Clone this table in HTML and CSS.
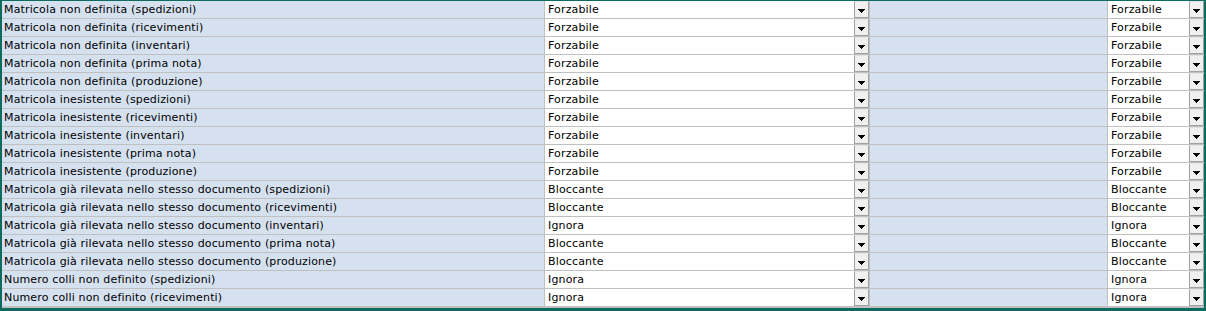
FILE: index.html
```html
<!DOCTYPE html>
<html lang="it">
<head>
<meta charset="utf-8">
<title>Controlli matricole</title>
<link rel="stylesheet" href="styles.css">
</head>
<body>
<div class="frame">
  <div class="grid">
    <div class="label">Matricola non definita (spedizioni)</div><div class="sel"><span class="val">Forzabile</span><span class="btn"><svg width="7" height="4" viewBox="0 0 7 4"><path d="M0 0h7v1H0zM1 1h5v1H1zM2 2h3v1H2zM3 3h1v1H3z"/></svg></span></div><div class="empty"></div><div class="sel alt"><span class="val">Forzabile</span><span class="btn"><svg width="7" height="4" viewBox="0 0 7 4"><path d="M0 0h7v1H0zM1 1h5v1H1zM2 2h3v1H2zM3 3h1v1H3z"/></svg></span></div>
    <div class="label">Matricola non definita (ricevimenti)</div><div class="sel"><span class="val">Forzabile</span><span class="btn"><svg width="7" height="4" viewBox="0 0 7 4"><path d="M0 0h7v1H0zM1 1h5v1H1zM2 2h3v1H2zM3 3h1v1H3z"/></svg></span></div><div class="empty"></div><div class="sel alt"><span class="val">Forzabile</span><span class="btn"><svg width="7" height="4" viewBox="0 0 7 4"><path d="M0 0h7v1H0zM1 1h5v1H1zM2 2h3v1H2zM3 3h1v1H3z"/></svg></span></div>
    <div class="label">Matricola non definita (inventari)</div><div class="sel"><span class="val">Forzabile</span><span class="btn"><svg width="7" height="4" viewBox="0 0 7 4"><path d="M0 0h7v1H0zM1 1h5v1H1zM2 2h3v1H2zM3 3h1v1H3z"/></svg></span></div><div class="empty"></div><div class="sel alt"><span class="val">Forzabile</span><span class="btn"><svg width="7" height="4" viewBox="0 0 7 4"><path d="M0 0h7v1H0zM1 1h5v1H1zM2 2h3v1H2zM3 3h1v1H3z"/></svg></span></div>
    <div class="label">Matricola non definita (prima nota)</div><div class="sel"><span class="val">Forzabile</span><span class="btn"><svg width="7" height="4" viewBox="0 0 7 4"><path d="M0 0h7v1H0zM1 1h5v1H1zM2 2h3v1H2zM3 3h1v1H3z"/></svg></span></div><div class="empty"></div><div class="sel alt"><span class="val">Forzabile</span><span class="btn"><svg width="7" height="4" viewBox="0 0 7 4"><path d="M0 0h7v1H0zM1 1h5v1H1zM2 2h3v1H2zM3 3h1v1H3z"/></svg></span></div>
    <div class="label">Matricola non definita (produzione)</div><div class="sel"><span class="val">Forzabile</span><span class="btn"><svg width="7" height="4" viewBox="0 0 7 4"><path d="M0 0h7v1H0zM1 1h5v1H1zM2 2h3v1H2zM3 3h1v1H3z"/></svg></span></div><div class="empty"></div><div class="sel alt"><span class="val">Forzabile</span><span class="btn"><svg width="7" height="4" viewBox="0 0 7 4"><path d="M0 0h7v1H0zM1 1h5v1H1zM2 2h3v1H2zM3 3h1v1H3z"/></svg></span></div>
    <div class="label">Matricola inesistente (spedizioni)</div><div class="sel"><span class="val">Forzabile</span><span class="btn"><svg width="7" height="4" viewBox="0 0 7 4"><path d="M0 0h7v1H0zM1 1h5v1H1zM2 2h3v1H2zM3 3h1v1H3z"/></svg></span></div><div class="empty"></div><div class="sel alt"><span class="val">Forzabile</span><span class="btn"><svg width="7" height="4" viewBox="0 0 7 4"><path d="M0 0h7v1H0zM1 1h5v1H1zM2 2h3v1H2zM3 3h1v1H3z"/></svg></span></div>
    <div class="label">Matricola inesistente (ricevimenti)</div><div class="sel"><span class="val">Forzabile</span><span class="btn"><svg width="7" height="4" viewBox="0 0 7 4"><path d="M0 0h7v1H0zM1 1h5v1H1zM2 2h3v1H2zM3 3h1v1H3z"/></svg></span></div><div class="empty"></div><div class="sel alt"><span class="val">Forzabile</span><span class="btn"><svg width="7" height="4" viewBox="0 0 7 4"><path d="M0 0h7v1H0zM1 1h5v1H1zM2 2h3v1H2zM3 3h1v1H3z"/></svg></span></div>
    <div class="label">Matricola inesistente (inventari)</div><div class="sel"><span class="val">Forzabile</span><span class="btn"><svg width="7" height="4" viewBox="0 0 7 4"><path d="M0 0h7v1H0zM1 1h5v1H1zM2 2h3v1H2zM3 3h1v1H3z"/></svg></span></div><div class="empty"></div><div class="sel alt"><span class="val">Forzabile</span><span class="btn"><svg width="7" height="4" viewBox="0 0 7 4"><path d="M0 0h7v1H0zM1 1h5v1H1zM2 2h3v1H2zM3 3h1v1H3z"/></svg></span></div>
    <div class="label">Matricola inesistente (prima nota)</div><div class="sel"><span class="val">Forzabile</span><span class="btn"><svg width="7" height="4" viewBox="0 0 7 4"><path d="M0 0h7v1H0zM1 1h5v1H1zM2 2h3v1H2zM3 3h1v1H3z"/></svg></span></div><div class="empty"></div><div class="sel alt"><span class="val">Forzabile</span><span class="btn"><svg width="7" height="4" viewBox="0 0 7 4"><path d="M0 0h7v1H0zM1 1h5v1H1zM2 2h3v1H2zM3 3h1v1H3z"/></svg></span></div>
    <div class="label">Matricola inesistente (produzione)</div><div class="sel"><span class="val">Forzabile</span><span class="btn"><svg width="7" height="4" viewBox="0 0 7 4"><path d="M0 0h7v1H0zM1 1h5v1H1zM2 2h3v1H2zM3 3h1v1H3z"/></svg></span></div><div class="empty"></div><div class="sel alt"><span class="val">Forzabile</span><span class="btn"><svg width="7" height="4" viewBox="0 0 7 4"><path d="M0 0h7v1H0zM1 1h5v1H1zM2 2h3v1H2zM3 3h1v1H3z"/></svg></span></div>
    <div class="label">Matricola già rilevata nello stesso documento (spedizioni)</div><div class="sel"><span class="val">Bloccante</span><span class="btn"><svg width="7" height="4" viewBox="0 0 7 4"><path d="M0 0h7v1H0zM1 1h5v1H1zM2 2h3v1H2zM3 3h1v1H3z"/></svg></span></div><div class="empty"></div><div class="sel alt"><span class="val">Bloccante</span><span class="btn"><svg width="7" height="4" viewBox="0 0 7 4"><path d="M0 0h7v1H0zM1 1h5v1H1zM2 2h3v1H2zM3 3h1v1H3z"/></svg></span></div>
    <div class="label">Matricola già rilevata nello stesso documento (ricevimenti)</div><div class="sel"><span class="val">Bloccante</span><span class="btn"><svg width="7" height="4" viewBox="0 0 7 4"><path d="M0 0h7v1H0zM1 1h5v1H1zM2 2h3v1H2zM3 3h1v1H3z"/></svg></span></div><div class="empty"></div><div class="sel alt"><span class="val">Bloccante</span><span class="btn"><svg width="7" height="4" viewBox="0 0 7 4"><path d="M0 0h7v1H0zM1 1h5v1H1zM2 2h3v1H2zM3 3h1v1H3z"/></svg></span></div>
    <div class="label">Matricola già rilevata nello stesso documento (inventari)</div><div class="sel"><span class="val">Ignora</span><span class="btn"><svg width="7" height="4" viewBox="0 0 7 4"><path d="M0 0h7v1H0zM1 1h5v1H1zM2 2h3v1H2zM3 3h1v1H3z"/></svg></span></div><div class="empty"></div><div class="sel alt"><span class="val">Ignora</span><span class="btn"><svg width="7" height="4" viewBox="0 0 7 4"><path d="M0 0h7v1H0zM1 1h5v1H1zM2 2h3v1H2zM3 3h1v1H3z"/></svg></span></div>
    <div class="label">Matricola già rilevata nello stesso documento (prima nota)</div><div class="sel"><span class="val">Bloccante</span><span class="btn"><svg width="7" height="4" viewBox="0 0 7 4"><path d="M0 0h7v1H0zM1 1h5v1H1zM2 2h3v1H2zM3 3h1v1H3z"/></svg></span></div><div class="empty"></div><div class="sel alt"><span class="val">Bloccante</span><span class="btn"><svg width="7" height="4" viewBox="0 0 7 4"><path d="M0 0h7v1H0zM1 1h5v1H1zM2 2h3v1H2zM3 3h1v1H3z"/></svg></span></div>
    <div class="label">Matricola già rilevata nello stesso documento (produzione)</div><div class="sel"><span class="val">Bloccante</span><span class="btn"><svg width="7" height="4" viewBox="0 0 7 4"><path d="M0 0h7v1H0zM1 1h5v1H1zM2 2h3v1H2zM3 3h1v1H3z"/></svg></span></div><div class="empty"></div><div class="sel alt"><span class="val">Bloccante</span><span class="btn"><svg width="7" height="4" viewBox="0 0 7 4"><path d="M0 0h7v1H0zM1 1h5v1H1zM2 2h3v1H2zM3 3h1v1H3z"/></svg></span></div>
    <div class="label">Numero colli non definito (spedizioni)</div><div class="sel"><span class="val">Ignora</span><span class="btn"><svg width="7" height="4" viewBox="0 0 7 4"><path d="M0 0h7v1H0zM1 1h5v1H1zM2 2h3v1H2zM3 3h1v1H3z"/></svg></span></div><div class="empty"></div><div class="sel alt"><span class="val">Ignora</span><span class="btn"><svg width="7" height="4" viewBox="0 0 7 4"><path d="M0 0h7v1H0zM1 1h5v1H1zM2 2h3v1H2zM3 3h1v1H3z"/></svg></span></div>
    <div class="label">Numero colli non definito (ricevimenti)</div><div class="sel"><span class="val">Ignora</span><span class="btn"><svg width="7" height="4" viewBox="0 0 7 4"><path d="M0 0h7v1H0zM1 1h5v1H1zM2 2h3v1H2zM3 3h1v1H3z"/></svg></span></div><div class="empty"></div><div class="sel alt"><span class="val">Ignora</span><span class="btn"><svg width="7" height="4" viewBox="0 0 7 4"><path d="M0 0h7v1H0zM1 1h5v1H1zM2 2h3v1H2zM3 3h1v1H3z"/></svg></span></div>
  </div>
</div>
</body>
</html>
```

FILE: styles.css
```css
html, body {
  margin: 0;
  padding: 0;
  background: #0f6a60;
}
.frame {
  box-sizing: border-box;
  width: 1206px;
  height: 311px;
  border-style: solid;
  border-color: #0f6a60;
  border-width: 1px 2px 3px 2px;
  background: #c0c0c0;
  overflow: hidden;
  font-family: "DejaVu Sans", Verdana, sans-serif;
  font-size: 11px;
  letter-spacing: 0.15px;
  color: #000;
}
.grid {
  display: grid;
  grid-template-columns: 542px 324px 237px 96px;
  grid-auto-rows: 17px;
  column-gap: 1px;
  row-gap: 1px;
  border-bottom: 1px solid #c0c0c0;
}
.label, .empty, .alt {
  background: #d6e1f0;
}
.label {
  padding-left: 2px;
  line-height: 17px;
  white-space: nowrap;
  overflow: hidden;
}
.sel {
  display: flex;
  background: #fff;
}
.val {
  flex: 1;
  padding-left: 3px;
  line-height: 17px;
  white-space: nowrap;
  overflow: hidden;
}
.btn {
  box-sizing: border-box;
  width: 15px;
  height: 17px;
  display: flex;
  align-items: center;
  justify-content: center;
  padding-top: 2px;
  background: #f0f0f0;
  border-left: 1px solid #a0a0a0;
  border-right: 1px solid #a0a0a0;
  border-top: 1px solid #e3e3e3;
  border-bottom: 1px solid #a0a0a0;
}
.btn svg {
  display: block;
  fill: #000;
}
```
